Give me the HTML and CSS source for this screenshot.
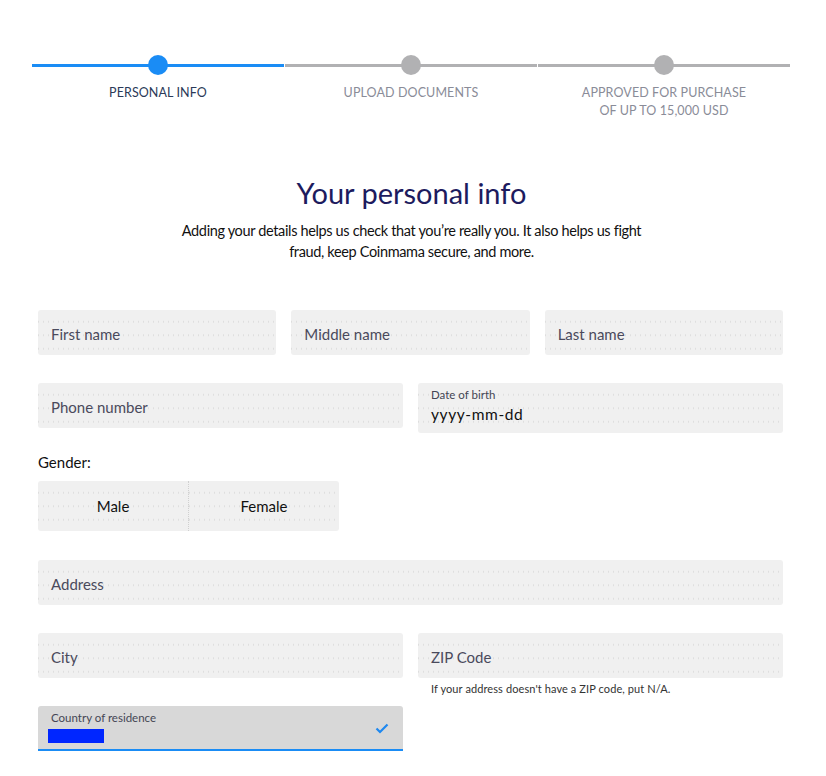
FILE: index.html
```html
<!DOCTYPE html>
<html lang="en">
<head>
<meta charset="utf-8">
<title>Your personal info</title>
<link rel="stylesheet" href="styles.css">
</head>
<body>
<div class="page">
  <ol class="stepper">
    <li class="step active"><span class="dot"></span><span class="step-label">PERSONAL INFO</span></li>
    <li class="step"><span class="dot"></span><span class="step-label">UPLOAD DOCUMENTS</span></li>
    <li class="step"><span class="dot"></span><span class="step-label">APPROVED FOR PURCHASE<br>OF UP TO 15,000 USD</span></li>
  </ol>

  <header class="intro">
    <h1 class="title">Your personal info</h1>
    <p class="lead">Adding your details helps us check that you’re really you. It also helps us fight<br>fraud, keep Coinmama secure, and more.</p>
  </header>

  <form class="form">
    <div class="row three">
      <div class="field"><span class="ph">First name</span></div>
      <div class="field"><span class="ph">Middle name</span></div>
      <div class="field"><span class="ph">Last name</span></div>
    </div>

    <div class="row two top">
      <div class="field"><span class="ph">Phone number</span></div>
      <div class="field tall">
        <span class="mini">Date of birth</span>
        <span class="val">yyyy-mm-dd</span>
      </div>
    </div>

    <div class="gender-label">Gender:</div>
    <div class="gender">
      <div class="gbtn">Male</div>
      <div class="gbtn">Female</div>
    </div>

    <div class="row one">
      <div class="field"><span class="ph">Address</span></div>
    </div>

    <div class="row two top">
      <div class="field"><span class="ph">City</span></div>
      <div class="col">
        <div class="field"><span class="ph">ZIP Code</span></div>
        <p class="help">If your address doesn't have a ZIP code, put N/A.</p>
      </div>
    </div>

    <div class="row two top country-row">
      <div class="select">
        <span class="mini">Country of residence</span>
        <span class="redact"></span>
        <svg class="check" width="14" height="11" viewBox="0 0 14 11"><polyline points="1.5,5.5 5,9 12.5,1.5" fill="none" stroke="#1e88f0" stroke-width="2.2"/></svg>
      </div>
      <div></div>
    </div>
  </form>
</div>
</body>
</html>
```

FILE: styles.css
```css
* { box-sizing: border-box; }
html, body { margin: 0; padding: 0; background: #fff; }
body {
  font-family: Lato, "Open Sans", "Noto Sans", sans-serif;
  color: #111;
}
.page { width: 826px; padding-top: 55px; }

/* stepper */
.stepper {
  list-style: none;
  margin: 0 0 0 32px;
  padding: 0;
  display: flex;
  gap: 1px;
  width: 759px;
}
.step {
  position: relative;
  width: 252px;
  display: flex;
  flex-direction: column;
  align-items: center;
}
.step::before {
  content: "";
  position: absolute;
  left: 0; right: 0;
  top: 9px;
  height: 3px;
  background: #b1b1b3;
}
.step.active::before { background: #1a8cf5; }
.dot {
  position: relative;
  width: 20px; height: 20px;
  border-radius: 50%;
  background: #b1b1b3;
}
.step.active .dot { background: #1a8cf5; }
.step-label {
  margin-top: 9px;
  font-size: 12.5px;
  line-height: 18px;
  text-align: center;
  color: #8a8c98;
  letter-spacing: 0.1px;
}
.step.active .step-label { color: #2b3a58; }

/* intro */
.intro { width: 759px; margin-left: 32px; margin-top: 55px; text-align: center; }
.title {
  margin: 0;
  font-size: 29px;
  line-height: 36px;
  font-weight: 400;
  color: #1d1b5e;
}
.lead {
  margin: 9px 0 0;
  font-size: 14.5px;
  line-height: 21px;
  color: #111;
  letter-spacing: -0.35px;
}

/* form */
.form { margin-left: 38px; width: 745px; margin-top: 48px; }
.row { display: grid; gap: 15px; margin-bottom: 28px; }
.row.three { grid-template-columns: 1fr 1fr 1fr; }
.row.two { grid-template-columns: 1fr 1fr; }
.row.one { grid-template-columns: 1fr; }
.row.top { align-items: start; }

.field, .gbtn {
  background-color: #f0f0f0;
  background-image: radial-gradient(circle, #dedede 0.5px, transparent 1px);
  background-size: 5px 13.5px;
  background-position: 3px 5px;
  border-radius: 3px;
}
.field {
  height: 45px;
  padding: 2px 13px 0;
  display: flex;
  align-items: center;
}
.ph { font-size: 15px; color: #4a4a5c; }
.field.tall {
  height: 50px;
  flex-direction: column;
  align-items: flex-start;
  justify-content: flex-start;
  padding-top: 5px;
}
.mini { font-size: 11.5px; line-height: 14px; color: #444654; }
.val { font-size: 15.5px; line-height: 20px; color: #111; letter-spacing: 0.6px; margin-top: 2px; }

.row.two.top:nth-of-type(2) { margin-bottom: 19px; }

.gender-label { font-size: 15px; line-height: 20px; color: #111; margin-bottom: 9px; }
.gender {
  display: flex;
  width: 301px;
  margin-bottom: 29px;
}
.gbtn {
  flex: 1;
  height: 50px;
  display: flex;
  align-items: center;
  justify-content: center;
  font-size: 15px;
  color: #111;
}
.gbtn:first-child { border-radius: 3px 0 0 3px; border-right: 1px dotted #d0d0d0; }
.gbtn:last-child { border-radius: 0 3px 3px 0; }

.col { display: flex; flex-direction: column; }
.help { margin: 4px 0 0 13px; font-size: 11px; line-height: 14px; color: #333; letter-spacing: 0.1px; }
.row.two.top:has(.col) { margin-bottom: 10px; }

.select {
  position: relative;
  height: 45px;
  background: #d8d8d8;
  border-radius: 3px 3px 0 0;
  border-bottom: 2px solid #1a8cf5;
  padding: 5px 13px 0;
  display: flex;
  flex-direction: column;
  align-items: flex-start;
}
.redact {
  display: block;
  width: 56px; height: 14px;
  background: #0026ff;
  margin: 4px 0 0 -3px;
}
.check { position: absolute; right: 14px; top: 17px; }
```
